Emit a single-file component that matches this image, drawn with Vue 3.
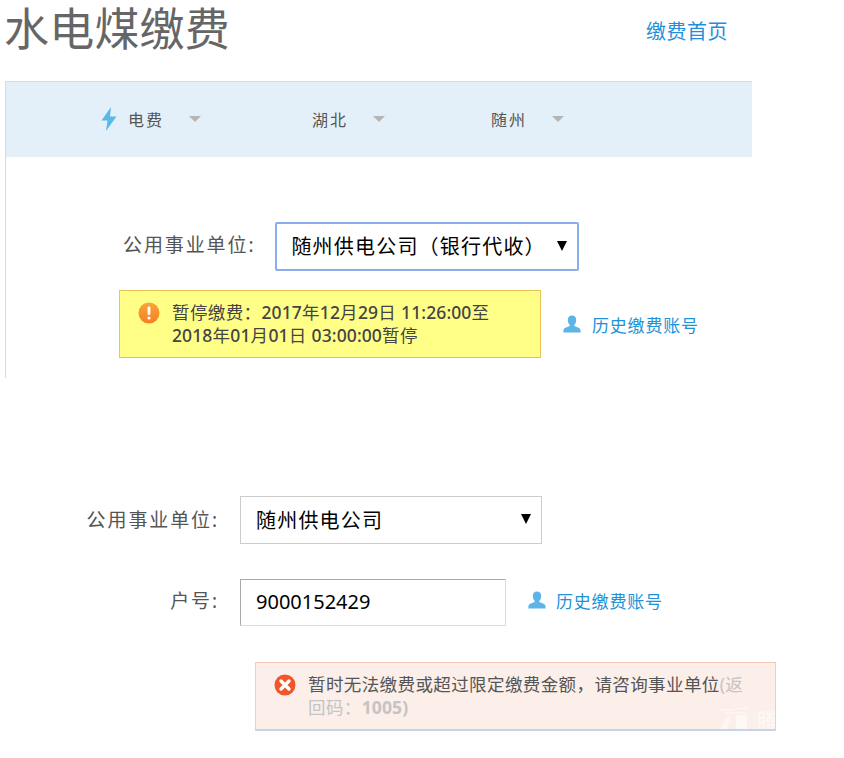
<script setup>
import { ref } from 'vue';

const tabs = ref([
  { name: '电费', icon: true, width: '212px' },
  { name: '湖北', icon: false, width: '179px' },
  { name: '随州', icon: false, width: '120px' },
]);
const accountNo = ref('9000152429');
</script>

<template>
  <div class="page">
    <!-- 标题 -->
    <div class="header">
      <h1 class="title">水电煤缴费</h1>
      <a class="home-link">缴费首页</a>
    </div>

    <!-- 上半部分 -->
    <div class="panel">
      <div class="tab-bar">
        <div v-for="tab in tabs" :key="tab.name" class="tab" :style="{ width: tab.width }">
          <svg v-if="tab.icon" class="bolt" width="18" height="26" viewBox="0 0 18 26">
            <path d="M11 1 L1.5 14.5 L7.5 14.5 L6 25 L16.5 10.5 L10 10.5 Z" fill="#5cb8ea" />
          </svg>
          <span class="tab-name">{{ tab.name }}</span>
          <i class="tab-arrow"></i>
        </div>
      </div>

      <div class="row first-row">
        <label class="label">公用事业单位:</label>
        <div class="select focused">
          <span>随州供电公司（银行代收）</span>
          <i class="select-arrow"></i>
        </div>
      </div>

      <div class="notice-row">
        <div class="notice warn">
          <svg class="notice-icon" width="22" height="22" viewBox="0 0 22 22">
            <defs>
              <linearGradient id="warnFill" x1="0" y1="0" x2="0" y2="1">
                <stop offset="0" stop-color="#f9a43c" />
                <stop offset="1" stop-color="#f58220" />
              </linearGradient>
            </defs>
            <circle cx="11" cy="11" r="10.5" fill="url(#warnFill)" />
            <rect x="9.6" y="4.5" width="2.8" height="8.5" rx="1.2" fill="#fff" />
            <circle cx="11" cy="16" r="1.6" fill="#fff" />
          </svg>
          <div class="notice-text">暂停缴费：<b>2017</b>年<b>12</b>月<b>29</b>日 <b>11:26:00</b>至<br><b>2018</b>年<b>01</b>月<b>01</b>日 <b>03:00:00</b>暂停</div>
        </div>
        <a class="history">
          <svg width="18" height="18" viewBox="0 0 18 18">
            <path d="M9 0.5 C11.8 0.5 13.2 2.6 13.2 5.2 C13.2 7.4 12.2 9 11.2 10 C11.2 11 12 11.4 13.6 12 C16 12.8 17.6 13.6 17.6 15.6 L17.6 17.5 L0.4 17.5 L0.4 15.6 C0.4 13.6 2 12.8 4.4 12 C6 11.4 6.8 11 6.8 10 C5.8 9 4.8 7.4 4.8 5.2 C4.8 2.6 6.2 0.5 9 0.5 Z" fill="#5cb5e6" />
          </svg>
          <span>历史缴费账号</span>
        </a>
      </div>
    </div>

    <!-- 下半部分 -->
    <div class="lower">
      <div class="row">
        <label class="label narrow">公用事业单位:</label>
        <div class="select plain">
          <span>随州供电公司</span>
          <i class="select-arrow"></i>
        </div>
      </div>

      <div class="row account-row">
        <label class="label narrow">户号:</label>
        <input v-model="accountNo" class="account-input" type="text">
        <a class="history">
          <svg width="18" height="18" viewBox="0 0 18 18">
            <path d="M9 0.5 C11.8 0.5 13.2 2.6 13.2 5.2 C13.2 7.4 12.2 9 11.2 10 C11.2 11 12 11.4 13.6 12 C16 12.8 17.6 13.6 17.6 15.6 L17.6 17.5 L0.4 17.5 L0.4 15.6 C0.4 13.6 2 12.8 4.4 12 C6 11.4 6.8 11 6.8 10 C5.8 9 4.8 7.4 4.8 5.2 C4.8 2.6 6.2 0.5 9 0.5 Z" fill="#5cb5e6" />
          </svg>
          <span>历史缴费账号</span>
        </a>
      </div>

      <div class="notice error">
        <svg class="notice-icon" width="22" height="22" viewBox="0 0 22 22">
          <circle cx="11" cy="11" r="10.5" fill="#f0562a" />
          <path d="M7 7 L15 15 M15 7 L7 15" stroke="#fff" stroke-width="3.4" stroke-linecap="round" />
        </svg>
        <div class="notice-text">暂时无法缴费或超过限定缴费金额，请咨询事业单位<span class="code">(返回码：<b>1005)</b></span></div>
        <div class="watermark">
          <svg width="30" height="24" viewBox="0 0 30 24">
            <path d="M1 3 H14 M16 1.5 H30 M6 6 H26" stroke="#fff" stroke-width="1.6" fill="none" />
            <path d="M8 10 L0 24 L8 24 L11 10 Z M17 8 H28 V24 H17 Z" fill="#fff" />
          </svg>
          <span>腾</span>
        </div>
      </div>
    </div>
  </div>
</template>

<style scoped>
.page {
  width: 844px;
  height: 758px;
  overflow: hidden;
  background: #fff;
  font-family: "Noto Sans", "Noto Sans CJK SC", sans-serif;
  color: #555;
}

a {
  cursor: pointer;
}

.header {
  display: flex;
  justify-content: space-between;
  align-items: flex-start;
  width: 724px;
  height: 81px;
  padding-left: 4px;
}

.title {
  margin: 0;
  font-size: 45px;
  font-weight: 400;
  line-height: 58px;
  letter-spacing: 0.2px;
  color: #666;
}

.home-link {
  margin-top: 17px;
  font-size: 20px;
  line-height: 30px;
  letter-spacing: 0.5px;
  color: #1f8fdc;
}

.panel {
  width: 747px;
  height: 297px;
  margin-left: 5px;
  box-sizing: border-box;
  border-top: 1px solid #cfdde9;
  border-left: 1px solid #cfdde9;
}

.tab-bar {
  display: flex;
  box-sizing: border-box;
  height: 75px;
  padding: 0 0 2px 94px;
  align-items: center;
  background: #e3f0f9;
}

.tab {
  display: flex;
  align-items: center;
  flex: none;
  font-size: 16px;
  color: #555;
}

.bolt {
  margin-right: 10px;
}

.tab-name {
  letter-spacing: 2px;
}

.tab-arrow {
  width: 0;
  height: 0;
  margin-left: 25px;
  border-left: 6.5px solid transparent;
  border-right: 6.5px solid transparent;
  border-top: 6.5px solid #b5b5b5;
}

.row {
  display: flex;
  align-items: center;
}

.first-row {
  margin-top: 65px;
  padding-left: 117px;
}

.label {
  font-size: 19px;
  letter-spacing: 1.9px;
  color: #555;
  white-space: nowrap;
  margin-right: 20px;
  margin-bottom: 2px;
}

.first-row .label,
.account-row .label {
  margin-bottom: 6px;
}

.label.narrow {
  width: 137px;
  margin-right: 21px;
  text-align: right;
}

.select {
  display: flex;
  align-items: center;
  justify-content: space-between;
  box-sizing: border-box;
  background: #fff;
  color: #000;
  font-size: 20px;
  letter-spacing: 1.2px;
  padding: 0 10px 2px 15px;
}

.select.focused {
  width: 304px;
  height: 49px;
  padding-left: 14px;
  border: 2px solid #8aaeeb;
  border-radius: 2px;
}

.select.plain {
  width: 302px;
  height: 48px;
  border: 1px solid #ccc;
}

.select-arrow {
  width: 0;
  height: 0;
  border-left: 5px solid transparent;
  border-right: 5px solid transparent;
  border-top: 10px solid #000;
}

.notice-row {
  display: flex;
  align-items: center;
  margin-top: 19px;
  padding-left: 113px;
}

.notice {
  position: relative;
  display: flex;
  align-items: flex-start;
  box-sizing: border-box;
  font-size: 17.5px;
  letter-spacing: 0.4px;
  line-height: 23px;
}

.notice b {
  font-weight: 500;
  letter-spacing: 0.1px;
}

.notice.warn {
  width: 422px;
  height: 68px;
  padding: 10px 18px;
  background: #ffff88;
  border: 1px solid #e9c45a;
  color: #444;
}

.notice-icon {
  flex: none;
  margin: 1px 12px 0 0;
}

.history {
  display: flex;
  align-items: center;
  gap: 11px;
  font-size: 17px;
  letter-spacing: 0.8px;
  color: #2191d8;
}

.notice-row .history {
  margin-left: 22px;
}

.lower {
  margin-top: 118px;
  padding-left: 82px;
}

.account-row {
  margin-top: 35px;
}

.account-input {
  width: 266px;
  height: 47px;
  box-sizing: border-box;
  padding: 0 15px 2px;
  border: 1px solid #ddd;
  border-top-color: #aaa;
  border-left-color: #aaa;
  outline: none;
  font-family: inherit;
  font-size: 20px;
  color: #000;
}

.account-row .history {
  margin-left: 22px;
  margin-bottom: 5px;
  gap: 10px;
}

.notice.error {
  width: 521px;
  height: 69px;
  margin: 36px 0 0 173px;
  padding: 10px 18px;
  background: #fceee9;
  border: 1px solid #f8c6b5;
  border-bottom: 2px solid #c9d3e6;
  border-left-color: #d2d6e2;
  border-right-color: #d2d6e2;
  color: #555;
  overflow: hidden;
}

.code {
  color: #c4c4c4;
}

.code b {
  font-weight: 700;
}

.watermark {
  position: absolute;
  left: 463px;
  top: 44px;
  display: flex;
  gap: 8px;
  align-items: flex-start;
  color: #fff;
  font-size: 22px;
  font-weight: 700;
  line-height: 26px;
  opacity: 0.55;
}
</style>
